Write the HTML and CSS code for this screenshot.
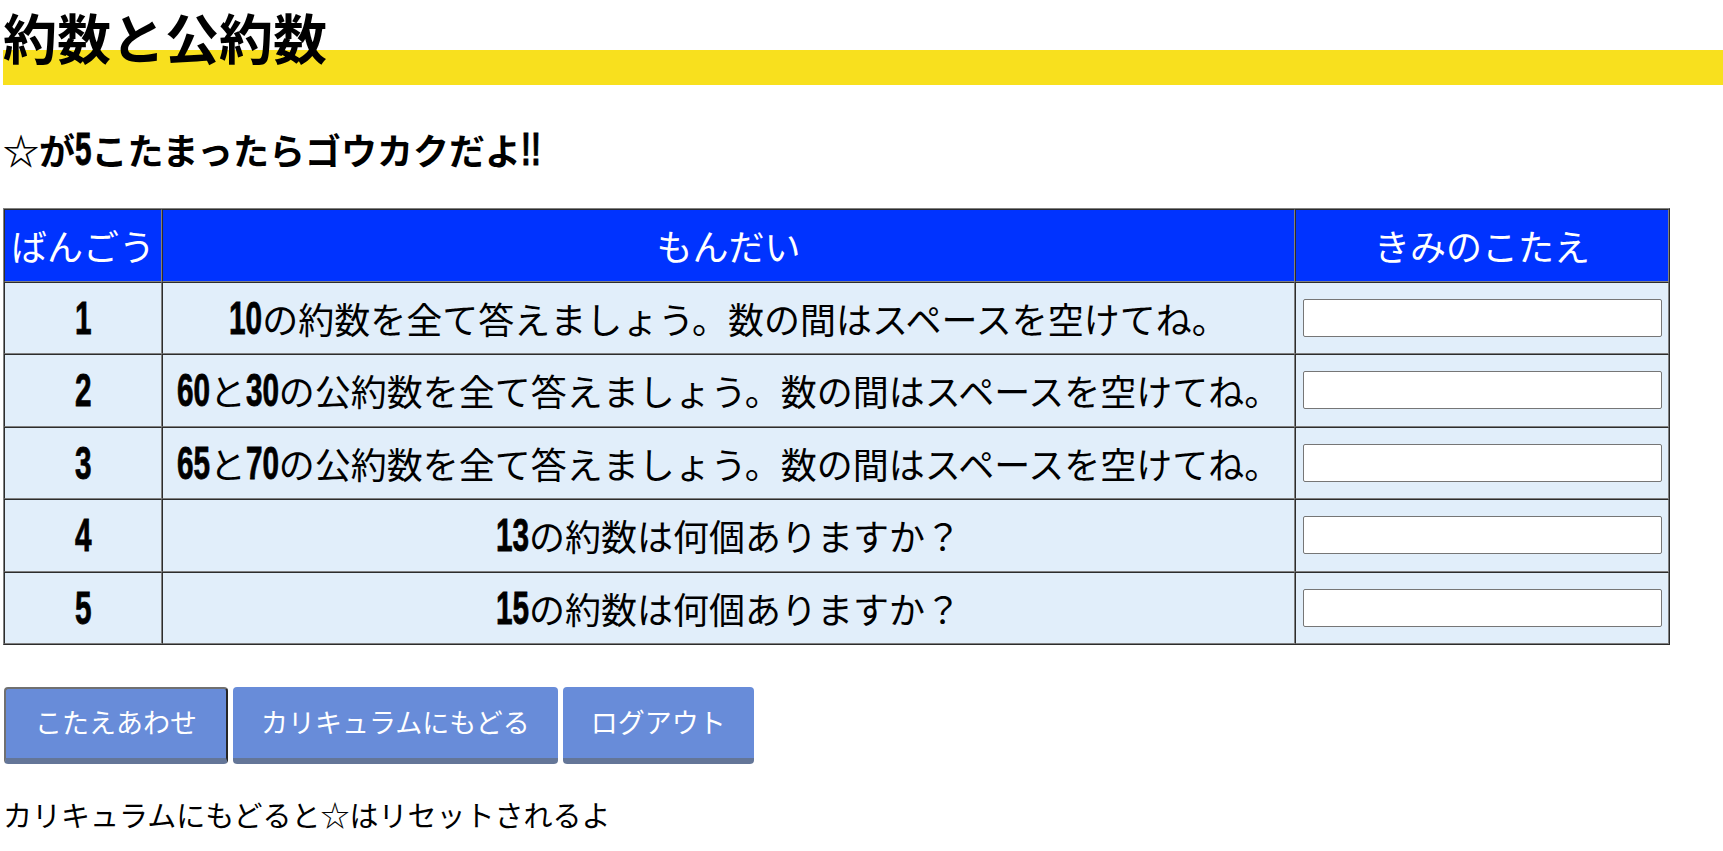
FILE: index.html
```html
<!DOCTYPE html>
<html lang="ja">
<head>
<meta charset="utf-8">
<title>約数と公約数</title>
<link rel="stylesheet" href="styles.css">
</head>
<body>
<h1 class="title">約数と公約数</h1>
<h2 class="goal">☆が<span class="num d1">5</span>こたまったらゴウカクだよ<span class="num bang">!!</span></h2>
<table class="quiz">
  <thead>
    <tr>
      <th class="col-no">ばんごう</th>
      <th class="col-q">もんだい</th>
      <th class="col-a">きみのこたえ</th>
    </tr>
  </thead>
  <tbody>
    <tr>
      <td class="no"><span class="num d1">1</span></td>
      <td class="q"><span class="num d2">10</span>の約数を全て答えましょう。数の間はスペースを空けてね。</td>
      <td class="a"><input type="text" class="answer"></td>
    </tr>
    <tr>
      <td class="no"><span class="num d1">2</span></td>
      <td class="q"><span class="num d2">60</span>と<span class="num d2">30</span>の公約数を全て答えましょう。数の間はスペースを空けてね。</td>
      <td class="a"><input type="text" class="answer"></td>
    </tr>
    <tr>
      <td class="no"><span class="num d1">3</span></td>
      <td class="q"><span class="num d2">65</span>と<span class="num d2">70</span>の公約数を全て答えましょう。数の間はスペースを空けてね。</td>
      <td class="a"><input type="text" class="answer"></td>
    </tr>
    <tr>
      <td class="no"><span class="num d1">4</span></td>
      <td class="q"><span class="num d2">13</span>の約数は何個ありますか？</td>
      <td class="a"><input type="text" class="answer"></td>
    </tr>
    <tr>
      <td class="no"><span class="num d1">5</span></td>
      <td class="q"><span class="num d2">15</span>の約数は何個ありますか？</td>
      <td class="a"><input type="text" class="answer"></td>
    </tr>
  </tbody>
</table>
<div class="actions">
  <button class="btn btn-focus" type="button">こたえあわせ</button>
  <button class="btn" type="button">カリキュラムにもどる</button>
  <button class="btn" type="button">ログアウト</button>
</div>
<p class="note">カリキュラムにもどると☆はリセットされるよ</p>
</body>
</html>
```
FILE: styles.css
```css
html, body {
  background: #ffffff;
}
body {
  margin: 0 0 0 3px;
  font-family: "Noto Sans CJK JP", "Noto Sans", sans-serif;
  color: #000;
}
/* tall condensed digits: Liberation Sans Bold squeezed horizontally */
.num {
  display: inline-block;
  font-family: "Liberation Sans", Arial, sans-serif;
  font-weight: 700;
  font-size: 1.26em;
  line-height: 1;
  transform: scaleX(0.655);
  transform-origin: 0 50%;
  -webkit-text-stroke: 0.8px #000;
}
.d1 {
  margin-right: -0.1918em;
}
.d2 {
  margin-right: -0.3836em;
}
.bang {
  margin-right: -0.2298em;
}
.title {
  margin: 0;
  padding: 10px 0 22px;
  font-size: 54px;
  line-height: 53px;
  font-weight: 700;
  background: linear-gradient(to bottom, transparent 50px, #f8e01e 50px);
}
.goal {
  margin: 39px 0 34px;
  font-size: 36px;
  line-height: 50px;
  font-weight: 700;
}
.quiz {
  width: 1667px;
  table-layout: fixed;
  border-spacing: 0;
  border: 1px outset #808080;
  margin-bottom: 42px;
}
.quiz th,
.quiz td {
  border: 1px inset #808080;
  padding: 0;
  height: 70.5px;
  line-height: 68px;
  text-align: center;
  font-size: 36px;
  white-space: nowrap;
  vertical-align: middle;
}
.quiz th {
  background: #0033ff;
  color: #ffffff;
  font-weight: 400;
}
.quiz td {
  background: #e1eefa;
}
.col-no {
  width: 156px;
}
.col-a {
  width: 372px;
}
.answer {
  display: block;
  width: 359px;
  height: 38px;
  box-sizing: border-box;
  border: 1px solid #767676;
  border-radius: 2px;
  background: #fff;
  margin: 0 0 0 7px;
}
.actions {
  display: flex;
  gap: 5px;
  margin-bottom: 29px;
  margin-left: 1px;
}
.btn {
  font-family: "Noto Sans CJK JP", "Noto Sans", sans-serif;
  font-size: 27px;
  line-height: 40px;
  padding: 15px 28px 16px;
  border: none;
  border-bottom: 6px solid #647698;
  border-radius: 4px;
  background: #688cd9;
  color: #ffffff;
}
.btn-focus {
  border: 2px solid #707070;
  border-right-color: #262626;
  border-bottom: 6px solid #647698;
  padding: 13px 29px 16px;
}
.note {
  margin: 0;
  font-size: 29px;
  line-height: 42px;
}
```
